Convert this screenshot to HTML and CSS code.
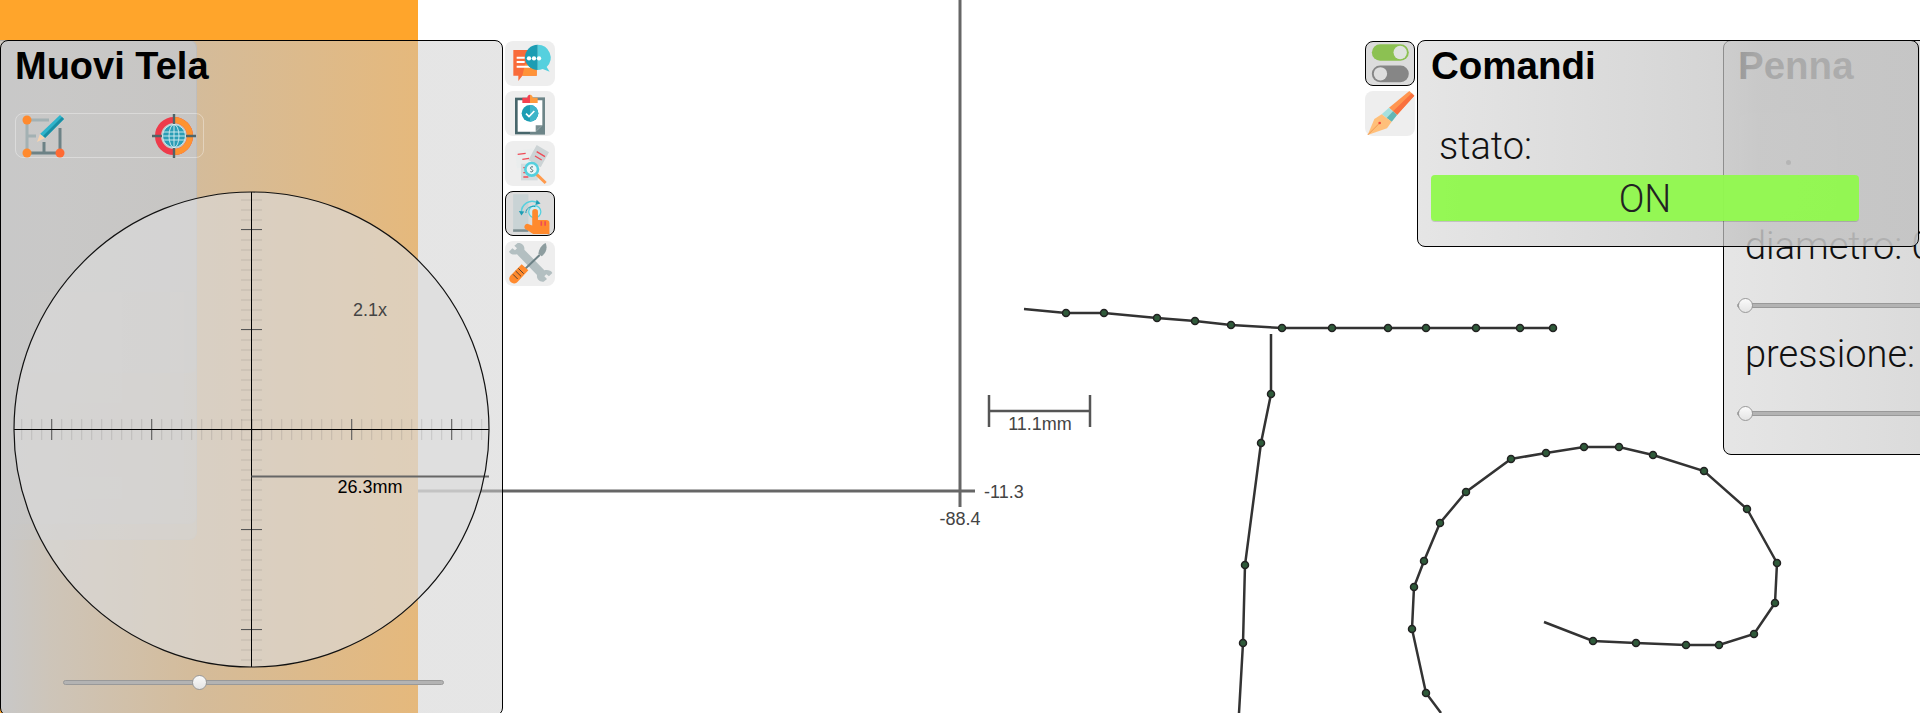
FILE: index.html
```html
<!DOCTYPE html>
<html>
<head>
  <title>Muovi Tela</title>
  <link rel="stylesheet" href="styles.css">
</head>
<body>

  <!-- drawing sheet -->
  <svg class="sheet" width="1920" height="713" viewBox="0 0 1920 713">
    <g class="axis">
      <line x1="960" y1="0" x2="960" y2="507"></line>
      <line x1="418" y1="491" x2="975" y2="491"></line>
    </g>
    <text class="sheet-label" x="984" y="498">-11.3</text>
    <text class="sheet-label" x="960" y="525" text-anchor="middle">-88.4</text>
    <g class="scale-bar">
      <line x1="989" y1="411" x2="1090" y2="411"></line>
      <line x1="989" y1="395" x2="989" y2="427"></line>
      <line x1="1090" y1="395" x2="1090" y2="427"></line>
    </g>
    <text class="sheet-label" x="1040" y="430" text-anchor="middle">11.1mm</text>

    <polyline class="ink" points="1024,309 1066,313 1104,313 1157,318 1195,321 1231,325 1282,328 1332,328 1388,328 1426,328 1476,328 1520,328 1553,328"></polyline>
    <polyline class="ink" points="1271,334 1271,394 1261,443 1245,565 1243,643 1239,713"></polyline>
    <polyline class="ink" points="1544,622 1593,641 1636,643 1686,645 1719,645 1754,634 1775,603 1777,563 1747,509 1704,471 1653,455 1619,447 1584,447 1546,453 1511,459 1466,492 1440,523 1424,561 1414,587 1412,629 1426,693 1441,713"></polyline>
    <g class="dots">
      <circle cx="1066" cy="313" r="3.5"></circle><circle cx="1104" cy="313" r="3.5"></circle>
      <circle cx="1157" cy="318" r="3.5"></circle><circle cx="1195" cy="321" r="3.5"></circle>
      <circle cx="1231" cy="325" r="3.5"></circle><circle cx="1282" cy="328" r="3.5"></circle>
      <circle cx="1332" cy="328" r="3.5"></circle><circle cx="1388" cy="328" r="3.5"></circle>
      <circle cx="1426" cy="328" r="3.5"></circle><circle cx="1476" cy="328" r="3.5"></circle>
      <circle cx="1520" cy="328" r="3.5"></circle><circle cx="1553" cy="328" r="3.5"></circle>
      <circle cx="1271" cy="394" r="3.5"></circle><circle cx="1261" cy="443" r="3.5"></circle>
      <circle cx="1245" cy="565" r="3.5"></circle><circle cx="1243" cy="643" r="3.5"></circle>
      <circle cx="1593" cy="641" r="3.5"></circle><circle cx="1636" cy="643" r="3.5"></circle>
      <circle cx="1686" cy="645" r="3.5"></circle><circle cx="1719" cy="645" r="3.5"></circle>
      <circle cx="1754" cy="634" r="3.5"></circle><circle cx="1775" cy="603" r="3.5"></circle>
      <circle cx="1777" cy="563" r="3.5"></circle><circle cx="1747" cy="509" r="3.5"></circle>
      <circle cx="1704" cy="471" r="3.5"></circle><circle cx="1653" cy="455" r="3.5"></circle>
      <circle cx="1619" cy="447" r="3.5"></circle><circle cx="1584" cy="447" r="3.5"></circle>
      <circle cx="1546" cy="453" r="3.5"></circle><circle cx="1511" cy="459" r="3.5"></circle>
      <circle cx="1466" cy="492" r="3.5"></circle><circle cx="1440" cy="523" r="3.5"></circle>
      <circle cx="1424" cy="561" r="3.5"></circle><circle cx="1414" cy="587" r="3.5"></circle>
      <circle cx="1412" cy="629" r="3.5"></circle><circle cx="1426" cy="693" r="3.5"></circle>
    </g>
  </svg>

  <div class="sidebar"></div>

  <!-- closed panels showing through -->
  <div class="ghost ghost-a"></div>
  <div class="ghost ghost-b"></div>
  <div class="ghost ghost-c"></div>
  <div class="ghost ghost-d"></div>
  <div class="ghost-bit ghost-bit-a"></div>
  <div class="ghost-bit ghost-bit-b"></div>
  <div class="ghost-bit ghost-bit-c"></div>

  <section class="panel panel-move">
    <h2>Muovi Tela</h2>
    <div class="tool-row">
      <svg width="50" height="45" viewBox="0 0 50 45">
        <g fill="none" stroke-width="3">
          <path d="M7 7h22" stroke="#a3b1b3"></path>
          <path d="M7 7v33" stroke="#a3b1b3"></path>
          <path d="M7 23h9" stroke="#a3b1b3"></path>
          <path d="M7 40h33" stroke="#6d8286"></path>
          <path d="M40 15v25" stroke="#6d8286"></path>
          <path d="M24 29v11" stroke="#6d8286"></path>
        </g>
        <path d="M40 2l4 4-19 19-5-4z" fill="#2fb4cb"></path>
        <path d="M42 4l2 2-19 19-2-2z" fill="#1a8ea3"></path>
        <path d="M20 21l5 4-8 4z" fill="#f6d3b0"></path>
        <circle cx="7" cy="7" r="4.5" fill="#ff8a2e"></circle>
        <circle cx="7" cy="40" r="4.5" fill="#ff8a2e"></circle>
        <circle cx="40" cy="40" r="4.5" fill="#ff6a33"></circle>
      </svg>
      <svg width="50" height="45" viewBox="0 0 50 45">
        <circle cx="25" cy="23" r="16" fill="none" stroke="#ee3b4b" stroke-width="6"></circle>
        <path d="M25 7a16 16 0 0 1 0 32" fill="none" stroke="#ff9330" stroke-width="6"></path>
        <circle cx="25" cy="23" r="11.5" fill="#2a9db5"></circle>
        <g fill="none" stroke="#d8eef2" stroke-width="0.9">
          <circle cx="25" cy="23" r="11.5"></circle>
          <ellipse cx="25" cy="23" rx="5" ry="11.5"></ellipse>
          <path d="M25 11.5v23M14 19h22M14 27h22M13.5 23h23"></path>
        </g>
        <path d="M25 1v10M25 35v10M3 23h10M37 23h10" stroke="#4f6468" stroke-width="2.4"></path>
      </svg>
    </div>

    <svg class="lens" width="480" height="480" viewBox="12 190 480 480">
      <defs>
        <clipPath id="lensClip"><circle cx="251.5" cy="429.5" r="237.5"></circle></clipPath>
      </defs>
      <circle class="lens-glass" cx="251.5" cy="429.5" r="237.5"></circle>
      <g clip-path="url(#lensClip)">
        <line class="tick" x1="21.2" y1="429.5" x2="489" y2="429.5"></line>
        <line class="tick" x1="251.5" y1="190" x2="251.5" y2="670" style="stroke-dashoffset:0.5"></line>
        <line class="tick-major" x1="51.2" y1="429.5" x2="489" y2="429.5"></line>
        <line class="tick-major" x1="251.5" y1="229" x2="251.5" y2="670"></line>
      </g>
      <line class="hair" x1="14" y1="429.5" x2="489" y2="429.5"></line>
      <line class="hair" x1="251.5" y1="192" x2="251.5" y2="667"></line>
      <line class="measure" x1="251.5" y1="476.5" x2="489" y2="476.5"></line>
      <circle class="lens-rim" cx="251.5" cy="429.5" r="237.5"></circle>
      <text class="zoom-label" x="370" y="316" text-anchor="middle">2.1x</text>
      <text class="measure-label" x="370" y="493" text-anchor="middle">26.3mm</text>
    </svg>

    <input class="slider slider-zoom" type="range" min="0" max="100" step="0.1" value="35.2">
  </section>

  <nav class="side-buttons side-left">
    <button class="side-btn">
      <svg viewBox="0 0 150 135">
        <path d="M25 27h70v77H52l-12 16v-16H25z" fill="#f96b3a"></path>
        <path d="M60 70h35v34H52z" fill="#ff9338"></path>
        <path d="M35 47h24v6H35zM35 60h24v6H35zM35 74h40v6H35z" fill="#fff"></path>
        <path d="M98 11a39 39 0 0 1 27 67l9 14-21-8a39 39 0 0 1-15 3z" fill="#55d0de"></path>
        <path d="M98 11a38 38 0 0 0 0 76z" fill="#1c9db3"></path>
        <circle cx="72" cy="52" r="6.5" fill="#fff"></circle>
        <circle cx="87" cy="52" r="6.5" fill="#fff"></circle>
        <circle cx="102" cy="52" r="6.5" fill="#fff"></circle>
      </svg>
    </button>
    <button class="side-btn">
      <svg viewBox="0 0 150 135">
        <rect x="30" y="20" width="90" height="110" fill="#47666b"></rect>
        <rect x="75" y="20" width="45" height="110" fill="#6d8588"></rect>
        <path d="M38 28h74v75l-20 19H38z" fill="#fff"></path>
        <path d="M92 122v-19h20z" fill="#7a8f92"></path>
        <path d="M52 36V20h15a9 9 0 0 1 8-9v25z" fill="#f4414f"></path>
        <path d="M75 11a9 9 0 0 1 8 9h15v16H75z" fill="#ff9a3c"></path>
        <circle cx="75" cy="67" r="25" fill="#1c9db3"></circle>
        <path d="M75 42a25 25 0 0 1 0 50z" fill="#3fb5c9"></path>
        <path d="M63 68l9 9 16-17" fill="none" stroke="#fff" stroke-width="5"></path>
      </svg>
    </button>
    <button class="side-btn">
      <svg viewBox="0 0 150 135">
        <path d="M30 30l55 -8 6 52-55 8z" fill="#eaeded"></path>
        <path d="M95 12l37 22-25 45-37-22z" fill="#ccd3d5"></path>
        <path d="M48 68h50v50H48z" fill="#d4dcde"></path>
        <path d="M38 40l24-3M52 55l20-3M95 32l25 15M90 45l20 12M55 80h35M55 95h15M55 108h15" stroke="#ef4a56" stroke-width="4" fill="none"></path>
        <path d="M95 100l27 26" stroke="#ff9a4c" stroke-width="9"></path>
        <circle cx="80" cy="85" r="19" fill="#e9f6f8" stroke="#55d0de" stroke-width="8"></circle>
        <path d="M84 78c-8-3-10 5-4 7s4 10-4 7" fill="none" stroke="#47666b" stroke-width="3"></path>
      </svg>
    </button>
    <button class="side-btn is-active">
      <svg viewBox="0 0 150 135">
        <path d="M22 7h48v118H22z" fill="#c9d3d5"></path>
        <path d="M22 117h48v8H22z" fill="#7e8f92"></path>
        <circle cx="90" cy="62" r="19" fill="#cfeef2" stroke="#55d0de" stroke-width="4"></circle>
        <path d="M48 64c0-26 26-44 52-30" fill="none" stroke="#55d0de" stroke-width="5"></path>
        <path d="M40 60l8 14 9-13z" fill="#1c9db3"></path>
        <path d="M96 24l12 12-16 5z" fill="#1c9db3"></path>
        <path d="M62 66c0-14 14-24 30-20" fill="none" stroke="#1c9db3" stroke-width="3"></path>
        <path d="M82 62a9 9 0 0 1 18 0v26h26a10 10 0 0 1 10 10v34H85l-22-14a9 9 0 0 1 8-17l11 4z" fill="#ff8a2e"></path>
        <path d="M108 92h5v14h-5zM120 92h5v14h-5z" fill="#ef4a56"></path>
      </svg>
    </button>
    <button class="side-btn">
      <svg viewBox="0 0 150 135">
        <path d="M12 32l10-10 8 6 6-6-8-8 10-8c12-2 22 8 20 20l60 62c10-2 20 0 24 8l-10 10-8-6-6 6 8 8-10 8c-12 2-22-8-20-20L36 40C26 42 16 40 12 32z" fill="#b3bfc1"></path>
        <path d="M122 6c6 14 2 30-12 40l-10-8c2-14 10-26 22-32z" fill="#8d9d9f"></path>
        <path d="M104 42L60 84" stroke="#6d8286" stroke-width="6" fill="none"></path>
        <path d="M50 70l20 18-32 34a14 14 0 0 1-22-18z" fill="#ff8a2e"></path>
        <path d="M32 90l16 16M40 82l16 16M24 100l14 14" stroke="#5a4232" stroke-width="3" fill="none"></path>
      </svg>
    </button>
  </nav>

  <section class="panel panel-pen">
    <h2>Penna</h2>
    <div class="pen-preview"><span class="pen-dot"></span></div>
    <p class="field-label">diametro: 0.1</p>
    <input class="slider slider-pen" type="range" min="0" max="100" value="0">
    <p class="field-label field-label-next">pressione: 0.1</p>
    <input class="slider slider-pen" type="range" min="0" max="100" value="0">
  </section>

  <section class="panel panel-commands">
    <h2>Comandi</h2>
    <p class="field-label state-label">stato:</p>
    <button class="state-btn">ON</button>
  </section>

  <nav class="side-buttons side-right">
    <button class="side-btn is-active">
      <svg viewBox="0 0 150 135">
        <rect x="18" y="7" width="116" height="52" rx="26" fill="#8cc152"></rect>
        <circle cx="107" cy="33" r="21" fill="#dfe3df"></circle>
        <rect x="18" y="74" width="116" height="52" rx="26" fill="#868686"></rect>
        <circle cx="45" cy="100" r="21" fill="#dedede"></circle>
      </svg>
    </button>
    <button class="side-btn">
      <svg viewBox="0 0 150 135">
        <path d="M133 0l15 14-52 58-24-22z" fill="#ff9550"></path>
        <path d="M140 7l8 7-52 58-12-11z" fill="#f9703e"></path>
        <path d="M72 50l24 22-16 20-30-22z" fill="#a5e0de"></path>
        <path d="M84 61l12 11-16 20-15-11z" fill="#62b6b4"></path>
        <path d="M50 70l30 22-14 20-58 20 20-48z" fill="#ffbf7a"></path>
        <path d="M8 132l36-36" stroke="#e8863a" stroke-width="2"></path>
        <circle cx="44" cy="96" r="4" fill="#f14a3a"></circle>
      </svg>
    </button>
  </nav>

</body>
</html>
```

FILE: styles.css
```css
html, body {
  margin: 0;
  height: 100%;
}
body {
  position: relative;
  width: 1920px;
  height: 713px;
  overflow: hidden;
  background-color: #fff;
  font-family: "Liberation Sans", Arial, sans-serif;
  color: #111;
}

/* sheet */
.sheet {
  position: absolute;
  left: 0;
  top: 0;
}
.axis line {
  stroke: #666;
  stroke-width: 3;
}
.sheet-label {
  font-size: 18px;
  fill: #444;
}
.scale-bar line {
  stroke: #555;
  stroke-width: 2.5;
}
.ink {
  fill: none;
  stroke: #333;
  stroke-width: 2.5;
  filter: blur(0.4px);
}
.dots {
  filter: blur(0.5px);
}
.dots circle {
  fill: #2f5a3a;
  stroke: #222;
  stroke-width: 1.5;
}

.sidebar {
  position: absolute;
  left: 0;
  top: 0;
  width: 418px;
  height: 713px;
  background-color: #ffa52b;
}

/* panels behind the open one */
.ghost {
  position: absolute;
  left: -10px;
  top: 40px;
  width: 207px;
  box-sizing: border-box;
  background-color: rgba(204,204,204,0.5);
  border: 1px solid rgba(0,0,0,0.08);
  border-radius: 8px;
}
.ghost-a { height: 252px; }
.ghost-b { height: 333px; }
.ghost-c { height: 484px; }
.ghost-d { height: 500px; }
.ghost-bit {
  position: absolute;
  background-color: rgba(255,255,255,0.1);
}
.ghost-bit-a { left: 0; top: 292px; width: 122px; height: 111px; }
.ghost-bit-b { left: 170px; top: 292px; width: 14px; height: 207px; }
.ghost-bit-c { left: 0; top: 477px; width: 122px; height: 22px; }

.panel {
  position: absolute;
  top: 40px;
  box-sizing: border-box;
  border: 1px solid #000;
  border-radius: 8px;
  padding: 4px 14px 0;
}
.panel h2 {
  margin: 0;
  font-size: 38.5px;
  line-height: 42px;
  color: #000;
}
.panel-move {
  left: 0;
  width: 503px;
  height: 676px;
  background: linear-gradient(to right, rgb(200,200,200) 0, rgba(200,200,200,0.9) 50px, rgba(196,196,196,0.726) 197px, rgba(204,204,204,0.5) 418px);
}
.panel-move h2 {
  font-size: 38px;
}
.panel-commands {
  left: 1417px;
  width: 502px;
  height: 207px;
  padding-left: 13px;
  background: linear-gradient(to right, rgba(204,204,204,0.5), rgba(196,196,196,0.72) 61%, rgba(196,196,196,0.86) 68%, rgba(195,195,195,0.9));
}
.panel-pen {
  left: 1723px;
  width: 500px;
  height: 415px;
  background: linear-gradient(to right, rgba(204,204,204,0.5), rgba(190,190,190,0.8));
}

.tool-row {
  display: flex;
  justify-content: space-between;
  align-items: center;
  width: 189px;
  height: 45px;
  box-sizing: border-box;
  margin-top: 26px;
  padding: 0 4px;
  border: 1px solid rgba(255,255,255,0.35);
  border-radius: 8px;
}
.tool-row svg {
  flex: none;
}

/* lens */
.lens {
  display: block;
  margin: 32px 0 0 -3px;
}
.lens-glass {
  fill: rgba(219,219,219,0.64);
}
.lens-rim {
  fill: none;
  stroke: #111;
  stroke-width: 1.2;
}
.hair {
  stroke: #000;
  stroke-width: 1;
}
.tick {
  stroke: rgba(90,90,90,0.18);
  stroke-width: 21;
  stroke-dasharray: 1 9;
}
.tick-major {
  stroke: #555;
  stroke-width: 21;
  stroke-dasharray: 1 99;
}
.measure {
  stroke: #666;
  stroke-width: 2;
}
.zoom-label {
  font-size: 18px;
  fill: #444;
}
.measure-label {
  font-size: 18px;
  fill: #000;
}

/* sliders */
.slider {
  -webkit-appearance: none;
  appearance: none;
  display: block;
  height: 16px;
  margin: 0;
  padding: 0;
  background: transparent;
}
.slider::-webkit-slider-runnable-track {
  height: 5px;
  background-color: #b3b3b3;
  border: 1px solid #999;
  border-radius: 3px;
  box-sizing: border-box;
}
.slider::-webkit-slider-thumb {
  -webkit-appearance: none;
  width: 15px;
  height: 15px;
  margin-top: -6px;
  box-sizing: border-box;
  border: 1px solid #999;
  border-radius: 50%;
  background: linear-gradient(#fafafa, #e4e4e4);
}
.slider-zoom {
  width: 381px;
  margin: 4px 0 0 48px;
}
.slider-pen {
  width: 420px;
  margin-top: 30px;
  margin-left: -1px;
}

/* side buttons */
.side-buttons {
  position: absolute;
  top: 41px;
  display: flex;
  flex-direction: column;
  gap: 5px;
}
.side-left { left: 505px; }
.side-right { left: 1365px; }
.side-btn {
  display: block;
  width: 50px;
  height: 45px;
  padding: 0;
  box-sizing: border-box;
  border: 0;
  border-radius: 8px;
  background-color: #eee;
}
.side-btn svg {
  display: block;
  width: 100%;
  height: 100%;
}
.side-btn.is-active {
  background-color: #dcdcdc;
  border: 1px solid #000;
}

/* pen panel */
.pen-preview {
  display: flex;
  align-items: center;
  justify-content: center;
  width: 98px;
  height: 98px;
  margin-top: 26px;
  margin-left: 1px;
  border-radius: 8px;
  background-color: rgba(255,255,255,0.12);
}
.pen-dot {
  width: 5px;
  height: 5px;
  margin-top: 1px;
  border-radius: 50%;
  background-color: #555;
}
.field-label {
  margin: 14px 0 0 7px;
  font-family: Roboto, "Liberation Sans", sans-serif;
  font-weight: 300;
  font-size: 38px;
  line-height: 42px;
  white-space: nowrap;
}
.field-label-next {
  margin-top: 20px;
}
.state-label {
  margin-top: 38px;
  margin-left: 8px;
}
.state-btn {
  display: block;
  box-sizing: border-box;
  width: 428px;
  height: 46px;
  margin-top: 8px;
  padding: 2px 0 0;
  border: 0;
  border-radius: 4px;
  background-color: rgba(146,248,80,0.97);
  box-shadow: 0 1px 0 rgba(0,0,0,0.15);
  color: #222;
  font-family: Roboto, "Liberation Sans", sans-serif;
  font-weight: 300;
  font-size: 38px;
  line-height: 44px;
  text-align: center;
}
```
